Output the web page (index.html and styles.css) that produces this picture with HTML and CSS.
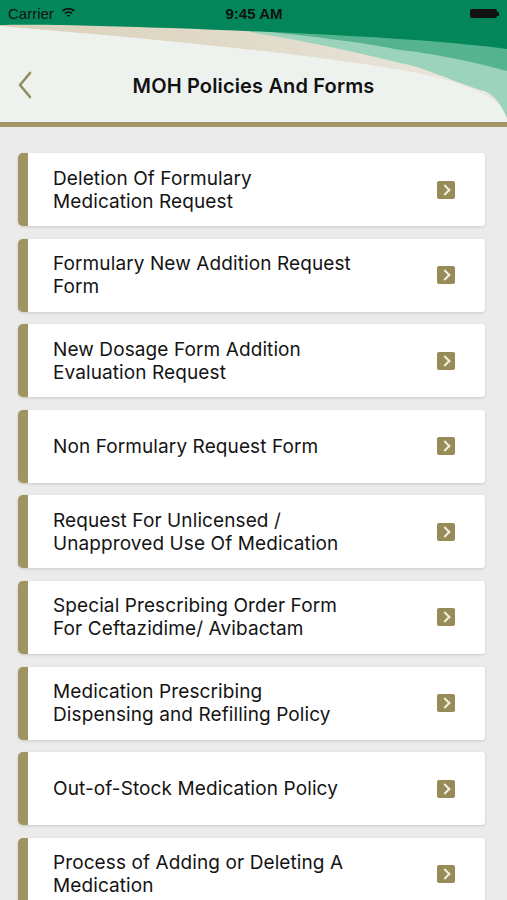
FILE: index.html
```html
<!DOCTYPE html>
<html lang="en">
<head>
<meta charset="utf-8">
<title>MOH Policies And Forms</title>
<link rel="stylesheet" href="styles.css">
</head>
<body>
<div class="screen">
  <header class="topbar">
    <svg class="wave" viewBox="0 0 507 122" preserveAspectRatio="none" aria-hidden="true">
      <defs>
        <linearGradient id="beige" x1="0" y1="0" x2="1" y2="0">
          <stop offset="0" stop-color="#d9d1ba"/>
          <stop offset="0.55" stop-color="#e2dccb"/>
          <stop offset="1" stop-color="#ece8e2"/>
        </linearGradient>
      </defs>
      <rect width="507" height="122" fill="#eef2ef"/>
      <path d="M0,0 H507 V112 C490,92 450,78 400,70 C300,52 120,36 0,26 Z" fill="url(#beige)"/>
      <path d="M250,0 H507 V118 C500,102 492,92 480,90 C450,80 420,66 400,63 C350,50 300,40 250,32 Z" fill="#9cd3bc"/>
      <path d="M260,0 H507 V71 C460,58 420,52 400,50 C360,42 310,36 260,31 Z" fill="#56b38f"/>
      <path d="M0,0 H507 V49 C420,38 300,33 170,28 C100,26 40,24 0,25 Z" fill="#03875a"/>
    </svg>
    <div class="status">
      <div class="status-left">
        <span>Carrier</span>
        <svg class="wifi" viewBox="0 0 16 12" aria-hidden="true">
          <path d="M1,4.2 A10,10 0 0 1 15,4.2 L13.6,5.7 A8,8 0 0 0 2.4,5.7 Z" fill="#111"/>
          <path d="M3.6,6.9 A6.3,6.3 0 0 1 12.4,6.9 L11,8.3 A4.3,4.3 0 0 0 5,8.3 Z" fill="#111"/>
          <path d="M6.3,9.6 A2.5,2.5 0 0 1 9.7,9.6 L8,11.4 Z" fill="#111"/>
        </svg>
      </div>
      <div class="status-time">9:45 AM</div>
      <div class="status-right">
        <span class="battery"></span>
      </div>
    </div>
    <div class="nav">
      <button class="back" aria-label="Back">
        <svg viewBox="0 0 16 28" aria-hidden="true">
          <path d="M13,2 L3,14 L13,26" fill="none" stroke="#928c62" stroke-width="2.6" stroke-linecap="round" stroke-linejoin="round"/>
        </svg>
      </button>
      <h1 class="title">MOH Policies And Forms</h1>
      <span class="nav-spacer"></span>
    </div>
  </header>
  <div class="rule"></div>

  <ul class="list">
    <li class="card"><span class="label">Deletion Of Formulary<br>Medication Request</span><span class="go"></span></li>
    <li class="card"><span class="label">Formulary New Addition Request<br>Form</span><span class="go"></span></li>
    <li class="card"><span class="label">New Dosage Form Addition<br>Evaluation Request</span><span class="go"></span></li>
    <li class="card"><span class="label">Non Formulary Request Form</span><span class="go"></span></li>
    <li class="card"><span class="label">Request For Unlicensed /<br>Unapproved Use Of Medication</span><span class="go"></span></li>
    <li class="card"><span class="label">Special Prescribing Order Form<br>For Ceftazidime/ Avibactam</span><span class="go"></span></li>
    <li class="card"><span class="label">Medication Prescribing<br>Dispensing and Refilling Policy</span><span class="go"></span></li>
    <li class="card"><span class="label">Out-of-Stock Medication Policy</span><span class="go"></span></li>
    <li class="card"><span class="label">Process of Adding or Deleting A<br>Medication</span><span class="go"></span></li>
  </ul>
</div>
</body>
</html>
```
FILE: styles.css
```css
* { box-sizing: border-box; }
html, body {
  margin: 0;
  padding: 0;
  background: #ebebeb;
  font-family: Inter, "Liberation Sans", Arial, sans-serif;
  color: #141414;
}
.screen {
  width: 507px;
  height: 900px;
  overflow: hidden;
  background: #ebebeb;
}
.topbar {
  position: relative;
  height: 122px;
  display: flex;
  flex-direction: column;
}
.wave {
  position: absolute;
  left: 0;
  top: 0;
  width: 507px;
  height: 122px;
  z-index: 0;
}
.status {
  position: relative;
  z-index: 1;
  height: 26px;
  display: flex;
  align-items: center;
  justify-content: space-between;
  padding: 0 7px 0 8px;
  font-family: "Liberation Sans", Arial, sans-serif;
  font-size: 15px;
  color: #111;
}
.status-left {
  flex: 1;
  display: flex;
  align-items: center;
  gap: 7px;
}
.wifi { width: 15px; height: 12px; margin-top: -2px; }
.status-time {
  font-weight: bold;
  font-size: 15px;
}
.status-right {
  flex: 1;
  display: flex;
  justify-content: flex-end;
}
.battery {
  position: relative;
  width: 27px;
  height: 9px;
  background: #111;
  border-radius: 2px;
  margin-right: 3px;
}
.battery::after {
  content: "";
  position: absolute;
  right: -2px;
  top: 3px;
  width: 2px;
  height: 4px;
  background: #111;
  border-radius: 0 1px 1px 0;
}
.nav {
  position: relative;
  z-index: 1;
  flex: 1;
  display: flex;
  align-items: center;
  padding: 24px 0 0 0;
}
.back {
  width: 60px;
  height: 40px;
  padding: 0 0 0 17px;
  border: 0;
  background: transparent;
  display: flex;
  align-items: center;
  margin-top: -3px;
}
.back svg { width: 16px; height: 28px; }
.title {
  flex: 1;
  margin: 0;
  text-align: center;
  font-size: 20px;
  font-weight: 600;
  letter-spacing: 0.15px;
  color: #111;
}
.nav-spacer { width: 60px; }
.rule {
  height: 5px;
  background: #a39769;
}
.list {
  list-style: none;
  margin: 0;
  padding: 26px 22px 0 18px;
  display: flex;
  flex-direction: column;
  gap: 12.6px;
}
.card {
  height: 73px;
  display: flex;
  align-items: center;
  justify-content: space-between;
  background: #fff;
  border-left: 10px solid #9f9462;
  border-radius: 5px 3px 3px 5px;
  box-shadow: 0 1px 3px rgba(0, 0, 0, 0.14);
  padding: 0 30px 0 25px;
}
.label {
  font-size: 19px;
  line-height: 23px;
  letter-spacing: 0.1px;
  color: #141414;
}
.go {
  position: relative;
  width: 18px;
  height: 18px;
  background: #968b59;
  border-radius: 2px;
  flex: none;
}
.go::after {
  content: "";
  position: absolute;
  left: 4px;
  top: 5px;
  width: 6px;
  height: 6px;
  border-right: 2px solid #f5f0dc;
  border-top: 2px solid #f5f0dc;
  transform: rotate(45deg);
}
```
